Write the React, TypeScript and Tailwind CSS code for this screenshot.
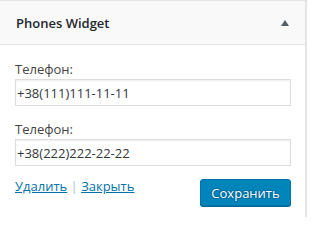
import React from "react";

export default function App() {
  return (
    <div className="w-[307px] h-[217px] bg-white overflow-hidden font-['Open_Sans',_'Liberation_Sans',_sans-serif]">
      <div className="h-full border-t border-r-2 border-[#e5e5e5] flex flex-col">
        <div className="h-[44px] shrink-0 bg-[#f9f9f9] border-b border-[#e5e5e5] flex items-center justify-between pl-[16px] pr-[16px]">
          <h3 className="text-[13px] font-semibold text-[#23282d] leading-[18px]">Phones Widget</h3>
          <svg width="8" height="6" viewBox="0 0 8 6" className="block">
            <path d="M4 0 L8 6 L0 6 Z" fill="#555d66" />
          </svg>
        </div>
        <div className="pl-[15px] pr-[14px] pt-[15px] text-[13px]">
          <label className="block leading-[18px] text-[#444]">Телефон:</label>
          <div className="mt-[1px] h-[27px] border border-[#dddddd] shadow-[inset_0_1px_2px_rgba(0,0,0,0.07)] flex items-center pl-[1px] text-[#32373c] leading-[18px]">
            +38(111)111-11-11
          </div>
          <label className="block mt-[14px] leading-[18px] text-[#444]">Телефон:</label>
          <div className="mt-[1px] h-[27px] border border-[#dddddd] shadow-[inset_0_1px_2px_rgba(0,0,0,0.07)] flex items-center pl-[1px] text-[#32373c] leading-[18px]">
            +38(222)222-22-22
          </div>
          <div className="mt-[13px] flex items-start justify-between">
            <div className="leading-[14px] whitespace-pre">
              <a className="text-[#0073aa] underline">Удалить</a>
              <span className="text-[#a3c4dc]"> | </span>
              <a className="text-[#0073aa] underline">Закрыть</a>
            </div>
            <button className="w-[91px] h-[27px] rounded-[3px] bg-[#0085ba] border border-[#0073aa] shadow-[0_1px_0_#006799] text-white text-[13px] leading-[25px] pt-[1px] text-center [text-shadow:0_-1px_1px_#006799,1px_0_1px_#006799,0_1px_1px_#006799,-1px_0_1px_#006799]">
              Сохранить
            </button>
          </div>
        </div>
      </div>
    </div>
  );
}
